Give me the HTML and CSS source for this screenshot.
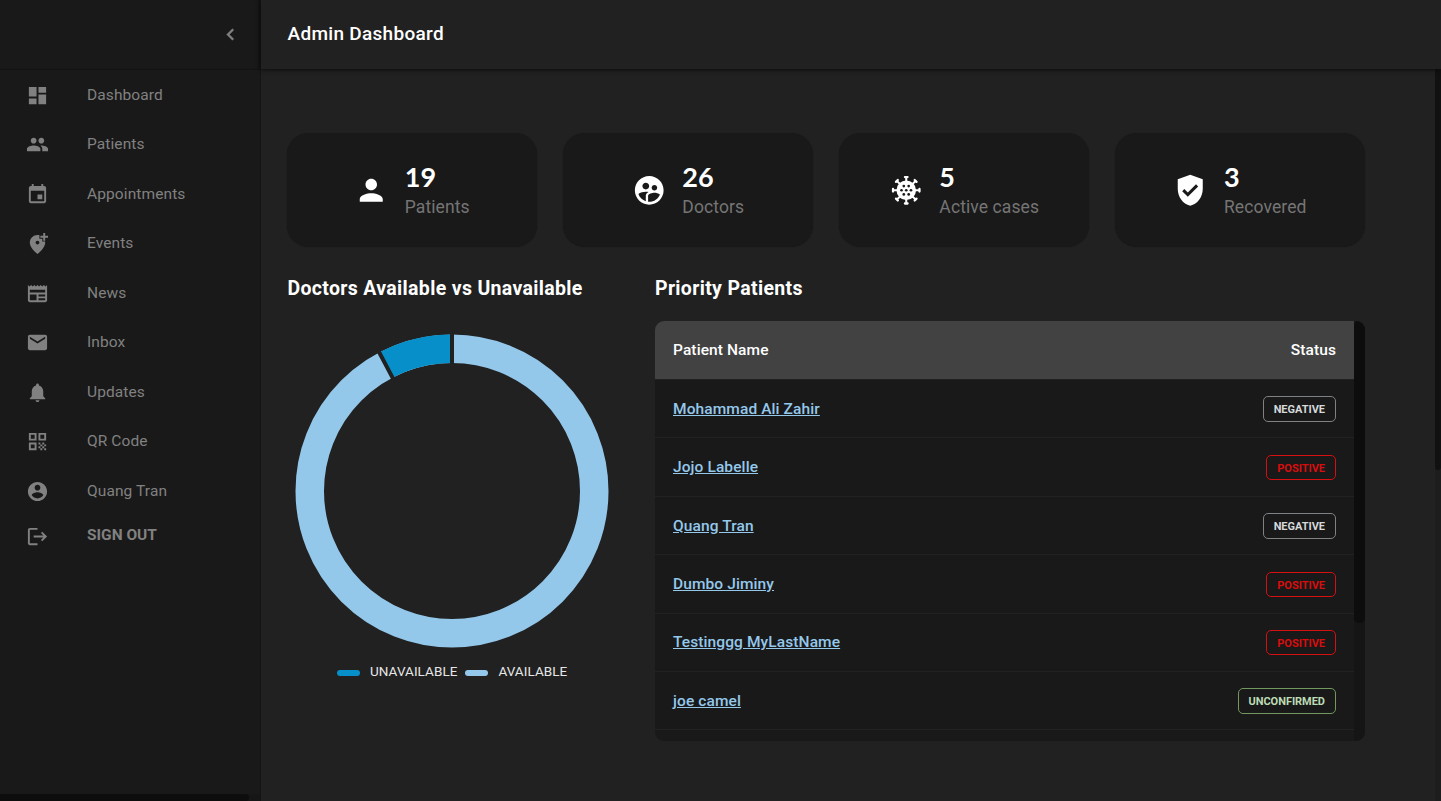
FILE: index.html
```html
<!DOCTYPE html>
<html lang="en">
<head>
<meta charset="utf-8">
<title>Admin Dashboard</title>
<link rel="stylesheet" href="styles.css">
</head>
<body>
<div class="app">
  <aside class="sidebar">
    <div class="sidebar-top">
      <svg class="icon" viewBox="0 0 24 24"><path d="M15.41 7.41 14 6l-6 6 6 6 1.41-1.41L10.83 12z"/></svg>
    </div>
    <nav class="nav">
      <a class="nav-item"><svg class="icon" viewBox="0 0 24 24"><path d="M3 13h8V3H3v10zm0 8h8v-6H3v6zm10 0h8V11h-8v10zm0-18v6h8V3h-8z"/></svg><span>Dashboard</span></a>
      <a class="nav-item"><svg class="icon" viewBox="0 0 24 24"><path d="M16 11c1.66 0 2.99-1.34 2.99-3S17.66 5 16 5c-1.66 0-3 1.34-3 3s1.34 3 3 3zm-8 0c1.66 0 2.99-1.34 2.99-3S9.66 5 8 5C6.34 5 5 6.34 5 8s1.34 3 3 3zm0 2c-2.33 0-7 1.17-7 3.5V19h14v-2.5c0-2.33-4.67-3.5-7-3.5zm8 0c-.29 0-.62.02-.97.05 1.16.84 1.97 1.97 1.97 3.45V19h6v-2.5c0-2.33-4.67-3.5-7-3.5z"/></svg><span>Patients</span></a>
      <a class="nav-item"><svg class="icon" viewBox="0 0 24 24"><path d="M17 12h-5v5h5v-5zM16 1v2H8V1H6v2H5c-1.11 0-1.99.9-1.99 2L3 19c0 1.1.89 2 2 2h14c1.1 0 2-.9 2-2V5c0-1.1-.9-2-2-2h-1V1h-2zm3 18H5V8h14v11z"/></svg><span>Appointments</span></a>
      <a class="nav-item"><svg class="icon" viewBox="0 0 24 24"><path d="M20 1v3h3v2h-3v3h-2V6h-3V4h3V1h2zm-8 12c1.1 0 2-.9 2-2s-.9-2-2-2-2 .9-2 2 .9 2 2 2zm2-9.75V7h3v3h2.92c.05.39.08.79.08 1.2 0 3.32-2.67 7.25-8 11.8-5.33-4.55-8-8.48-8-11.8C4 6.22 7.8 3 12 3c.68 0 1.35.08 2 .25z"/></svg><span>Events</span></a>
      <a class="nav-item"><svg class="icon" viewBox="0 0 24 24"><path d="m22 3-1.67 1.67L18.67 3 17 4.67 15.33 3l-1.66 1.67L12 3l-1.67 1.67L8.67 3 7 4.67 5.33 3 3.67 4.67 2 3v16c0 1.1.9 2 2 2h16c1.1 0 2-.9 2-2V3zM11 19H4v-6h7v6zm9 0h-7v-2h7v2zm0-4h-7v-2h7v2zm0-4H4V8h16v3z"/></svg><span>News</span></a>
      <a class="nav-item"><svg class="icon" viewBox="0 0 24 24"><path d="M20 4H4c-1.1 0-1.99.9-1.99 2L2 18c0 1.1.9 2 2 2h16c1.1 0 2-.9 2-2V6c0-1.1-.9-2-2-2zm0 4-8 5-8-5V6l8 5 8-5v2z"/></svg><span>Inbox</span></a>
      <a class="nav-item"><svg class="icon" viewBox="0 0 24 24"><path d="M12 22c1.1 0 2-.9 2-2h-4c0 1.1.89 2 2 2zm6-6v-5c0-3.07-1.64-5.64-4.5-6.32V4c0-.83-.67-1.5-1.5-1.5s-1.5.67-1.5 1.5v.68C7.63 5.36 6 7.92 6 11v5l-2 2v1h16v-1l-2-2z"/></svg><span>Updates</span></a>
      <a class="nav-item"><svg class="icon" viewBox="0 0 24 24"><path d="M3 11h8V3H3v8zm2-6h4v4H5V5zM3 21h8v-8H3v8zm2-6h4v4H5v-4zM13 3v8h8V3h-8zm6 6h-4V5h4v4zM19 19h2v2h-2zM13 13h2v2h-2zM15 15h2v2h-2zM13 17h2v2h-2zM15 19h2v2h-2zM17 17h2v2h-2zM17 13h2v2h-2zM19 15h2v2h-2z"/></svg><span>QR Code</span></a>
      <a class="nav-item"><svg class="icon" viewBox="0 0 24 24"><path d="M12 2C6.48 2 2 6.48 2 12s4.48 10 10 10 10-4.48 10-10S17.52 2 12 2zm0 3c1.66 0 3 1.34 3 3s-1.34 3-3 3-3-1.34-3-3 1.34-3 3-3zm0 14.2c-2.5 0-4.71-1.28-6-3.22.03-1.99 4-3.08 6-3.08 1.99 0 5.97 1.09 6 3.08-1.29 1.94-3.5 3.22-6 3.22z"/></svg><span>Quang Tran</span></a>
      <a class="nav-item sign-out"><svg class="icon" viewBox="0 0 24 24"><path d="m17 7-1.41 1.41L18.17 11H8v2h10.17l-2.58 2.58L17 17l5-5zM4 5h8V3H4c-1.1 0-2 .9-2 2v14c0 1.1.9 2 2 2h8v-2H4V5z"/></svg><span>SIGN OUT</span></a>
    </nav>
    <div class="side-scroll"><div class="side-thumb"></div></div>
  </aside>
  <div class="main">
    <header class="header"><h1>Admin Dashboard</h1></header>
    <div class="body">
      <div class="content">
        <section class="cards">
          <div class="card">
            <svg class="card-icon" viewBox="0 0 24 24"><path d="M12 12c2.21 0 4-1.79 4-4s-1.79-4-4-4-4 1.79-4 4 1.79 4 4 4zm0 2c-2.67 0-8 1.34-8 4v2h16v-2c0-2.66-5.33-4-8-4z"/></svg>
            <div><div class="num">19</div><div class="label">Patients</div></div>
          </div>
          <div class="card">
            <svg class="card-icon" viewBox="0 0 24 24"><path d="M11.99 2c-5.52 0-10 4.48-10 10s4.48 10 10 10 10-4.48 10-10-4.48-10-10-10zm3.61 6.34c1.07 0 1.93.86 1.93 1.93 0 1.07-.86 1.93-1.93 1.93-1.07 0-1.93-.86-1.93-1.93-.01-1.07.86-1.93 1.93-1.93zm-6-1.58c1.3 0 2.36 1.06 2.36 2.36 0 1.3-1.06 2.36-2.36 2.36s-2.36-1.06-2.36-2.36c0-1.31 1.05-2.36 2.36-2.36zm0 9.13v3.75c-2.4-.75-4.3-2.6-5.14-4.96 1.05-1.12 3.67-1.69 5.14-1.69.53 0 1.2.08 1.9.22-1.64.87-1.9 2.02-1.9 2.68zM11.99 20c-.27 0-.53-.01-.79-.04v-4.07c0-1.42 2.94-2.13 4.4-2.13 1.07 0 2.92.39 3.84 1.15-1.17 2.97-4.06 5.09-7.45 5.09z"/></svg>
            <div><div class="num">26</div><div class="label">Doctors</div></div>
          </div>
          <div class="card">
            <svg class="card-icon" viewBox="0 0 24 24">
              <circle cx="12" cy="12" r="6.8"/>
              <path id="spike" d="M11.3 6V3.6h-.2a.8.8 0 0 1 0-1.6h1.8a.8.8 0 0 1 0 1.6h-.2V6z"/>
              <use href="#spike" transform="rotate(45 12 12)"/><use href="#spike" transform="rotate(90 12 12)"/><use href="#spike" transform="rotate(135 12 12)"/><use href="#spike" transform="rotate(180 12 12)"/><use href="#spike" transform="rotate(225 12 12)"/><use href="#spike" transform="rotate(270 12 12)"/><use href="#spike" transform="rotate(315 12 12)"/>
              <g class="holes"><circle cx="12" cy="12" r=".95"/><circle cx="8.7" cy="12" r=".95"/><circle cx="15.3" cy="12" r=".95"/><circle cx="10.3" cy="9.1" r=".95"/><circle cx="13.7" cy="9.1" r=".95"/><circle cx="10.3" cy="14.9" r=".95"/><circle cx="13.7" cy="14.9" r=".95"/></g>
            </svg>
            <div><div class="num">5</div><div class="label">Active cases</div></div>
          </div>
          <div class="card">
            <svg class="card-icon" viewBox="0 0 24 24"><path d="M12 1.2 3.3 4.4v6.6c0 5.6 3.4 10.5 8.7 11.8 5.3-1.3 8.7-6.2 8.7-11.8V4.4zM10.3 16.6l-3.9-3.9 1.5-1.5 2.4 2.4 5.7-5.7 1.5 1.5z"/></svg>
            <div><div class="num">3</div><div class="label">Recovered</div></div>
          </div>
        </section>
        <div class="columns">
          <section class="chart">
            <h2>Doctors Available vs Unavailable</h2>
            <svg class="donut" viewBox="-165 -165 330 330">
              <circle class="ring-available" r="142.25" pathLength="26" transform="rotate(-90)"/>
              <circle class="ring-unavailable" r="142.25" pathLength="26" transform="rotate(-90)"/>
              <path class="gap" d="M0-126V-159M-58.55-111.56-73.9-140.8"/>
            </svg>
            <div class="legend">
              <span class="swatch dark"></span><span>UNAVAILABLE</span>
              <span class="swatch light"></span><span>AVAILABLE</span>
            </div>
          </section>
          <section class="priority">
            <h2>Priority Patients</h2>
            <div class="table">
              <div class="rows">
                <div class="row head"><span>Patient Name</span><span>Status</span></div>
                <div class="row"><a>Mohammad Ali Zahir</a><span class="tag">NEGATIVE</span></div>
                <div class="row"><a>Jojo Labelle</a><span class="tag red">POSITIVE</span></div>
                <div class="row"><a>Quang Tran</a><span class="tag">NEGATIVE</span></div>
                <div class="row"><a>Dumbo Jiminy</a><span class="tag red">POSITIVE</span></div>
                <div class="row"><a>Testinggg MyLastName</a><span class="tag red">POSITIVE</span></div>
                <div class="row"><a>joe camel</a><span class="tag green">UNCONFIRMED</span></div>
              </div>
              <div class="table-scroll"><div class="table-thumb"></div></div>
            </div>
          </section>
        </div>
      </div>
      <div class="page-scroll"><div class="page-thumb"></div></div>
    </div>
  </div>
</div>
</body>
</html>
```
FILE: styles.css
```css
* { box-sizing: border-box; }
body { margin: 0; background: #212121; color: #fff; font-family: Roboto, sans-serif; }
h1, h2 { margin: 0; }
.app { display: flex; width: 1441px; height: 801px; overflow: hidden; }

.sidebar { display: flex; flex-direction: column; width: 261px; background: #191919; border-right: 1px solid #141414; color: #818181; }
.sidebar-top { display: flex; align-items: center; justify-content: flex-end; height: 70px; padding-right: 18px; border-bottom: 1px solid #131313; box-shadow: inset -3px 0 3px -2px #101010; }
.sidebar-top .icon { stroke: #818181; stroke-width: .5; }
.icon { width: 23px; height: 23px; fill: #818181; flex: none; }
.nav { flex: 1; padding-top: .5px; }
.nav-item { display: flex; align-items: center; height: 49.5px; padding-left: 26px; gap: 38px; font-size: 15.5px; letter-spacing: 0.1px; line-height: 20px; }
.nav-item span { padding-bottom: 1px; }
.sign-out { height: 41px; font-weight: 700; letter-spacing: 0; }
.sign-out span { padding-bottom: 3px; }
.side-scroll { height: 7px; background: #161616; }
.side-thumb { width: 249px; height: 7px; background: #0d0d0d; border-radius: 0 4px 4px 0; }

.main { flex: 1; display: flex; flex-direction: column; }
.header { height: 69px; padding: 22px 26.5px; box-shadow: 0 1px 4px #0b0b0b; z-index: 1; background: #212121; }
.header h1 { font-size: 19px; font-weight: 500; line-height: 24px; letter-spacing: 0.3px; }
.body { flex: 1; display: flex; justify-content: space-between; }
.content { width: 1104px; padding: 64px 0 0 26px; }
.page-scroll { width: 6px; background: #1d1d1d; }
.page-thumb { height: 401px; background: #111; border-radius: 0 0 3px 3px; }

.cards { display: grid; grid-template-columns: repeat(4, 250px); gap: 26px; }
.card { display: flex; align-items: center; justify-content: center; gap: 16px; height: 114px; border-radius: 22px; background: #191919; box-shadow: 0 0 1px #151515; }
.card-icon { width: 34.5px; height: 34.5px; fill: #fff; margin-bottom: .5px; }
.holes { fill: #191919; }
.num { font: 700 27px/32px Lato, sans-serif; }
.label { font-size: 17.5px; line-height: 26px; letter-spacing: 0.1px; color: #757575; }
.label { padding-top: 1px; margin-bottom: -1px; }

.columns { display: flex; margin-top: 29px; }
h2 { font-size: 19.5px; font-weight: 700; line-height: 26px; letter-spacing: 0.33px; }
.chart { width: 368px; padding-left: .5px; }
.donut { display: block; width: 330px; height: 330px; margin: 24px 0 0 -.5px; }
.donut circle { fill: none; stroke-width: 28.5; }
.ring-available { stroke: #94c8eb; }
.ring-unavailable { stroke: #068fc8; stroke-dasharray: 2 24; stroke-dashoffset: 2; }
.gap { stroke: #212121; stroke-width: 4; }
.legend { display: flex; align-items: center; margin: 8px 0 0 49.5px; font-size: 13.5px; line-height: 16px; letter-spacing: .05px; color: #e6e6e6; }
.legend span:not(.swatch) { margin-top: -1px; }
.swatch { width: 23px; height: 6px; border-radius: 3px; margin: 2px 10px 0 0; }
.dark { background: #068fc8; }
.light { background: #94c8eb; margin-left: 8px; }

.table { display: flex; width: 710px; height: 420px; margin-top: 19px; border-radius: 9px; background: #191919; overflow: hidden; }
.rows { width: 699px; }
.row { display: flex; align-items: center; justify-content: space-between; height: 58.4px; padding: 1px 18px 0; border-bottom: 1px solid #222; font-size: 15.5px; font-weight: 500; letter-spacing: 0.1px; }
.head { height: 59px; padding-bottom: 1px; background: #424242; border-bottom: 1px solid #202020; }
.row a { color: #94c8eb; text-decoration: underline; padding-bottom: .6px; }
.tag { height: 26px; padding: 0 10px; border: 1px solid #7e8284; border-radius: 5px; font-size: 11px; line-height: 25px; font-weight: 700; letter-spacing: -0.03px; color: #d6d8d9; }
.red { border-color: #d41010; color: #d80d0d; height: 25px; }
.green { border-color: #70985f; color: #bddcb6; }
.table-scroll { width: 11px; background: #151515; }
.table-thumb { height: 302px; background: #0d0d0d; border-radius: 5px; }
```
